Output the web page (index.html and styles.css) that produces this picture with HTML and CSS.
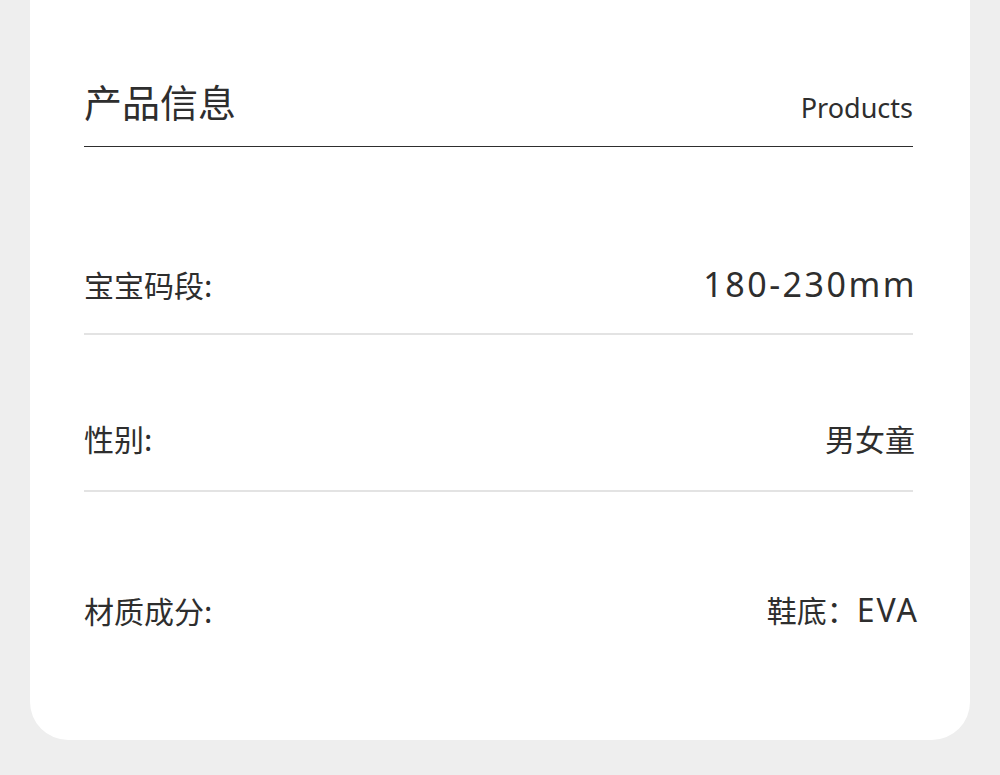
FILE: index.html
```html
<!DOCTYPE html>
<html lang="zh">
<head>
<meta charset="utf-8">
<link rel="stylesheet" href="styles.css">
</head>
<body>
<div class="card">
  <div class="header">
    <h1 class="title">产品信息</h1>
    <span class="subtitle">Products</span>
  </div>
  <div class="row row-1">
    <span class="label">宝宝码段:</span>
    <span class="value value-num">180-230mm</span>
  </div>
  <div class="row row-2">
    <span class="label">性别:</span>
    <span class="value">男女童</span>
  </div>
  <div class="row row-3">
    <span class="label">材质成分:</span>
    <span class="value">鞋底：<span class="latin">EVA</span></span>
  </div>
</div>
</body>
</html>
```
FILE: styles.css
```css
html, body {
  margin: 0;
  padding: 0;
  background: #eeeeee;
  height: 775px;
  overflow: hidden;
}
body {
  font-family: "Noto Sans CJK SC", "Noto Sans", sans-serif;
  color: #2e2e2e;
}
.card {
  margin: 0 30px;
  background: #ffffff;
  border-radius: 0 0 38px 38px;
  padding: 0 55px 0 54px;
  box-sizing: border-box;
  height: 740px;
}
.header {
  display: flex;
  justify-content: space-between;
  align-items: flex-end;
  padding-top: 76px;
  padding-bottom: 20px;
  border-bottom: 1px solid #2e2e2e;
  margin-right: 2px;
}
.title {
  margin: 0;
  font-size: 38px;
  font-weight: 400;
  line-height: 50px;
  letter-spacing: 0;
}
.subtitle {
  font-size: 27px;
  line-height: 36px;
  padding-bottom: 0;
  font-family: "Noto Sans", sans-serif;
}
.row {
  display: flex;
  justify-content: space-between;
  align-items: center;
  line-height: 40px;
}
.row-1 {
  padding-top: 117px;
  padding-bottom: 29px;
  border-bottom: 2px solid #e3e3e3;
  margin-right: 2px;
}
.row-2 {
  padding-top: 83px;
  padding-bottom: 32px;
  border-bottom: 2px solid #e3e3e3;
  margin-right: 2px;
}
.row-3 {
  padding-top: 97px;
}
.row-1 .value, .row-2 .value {
  margin-right: -2px;
}
.label {
  font-size: 30px;
}
.value {
  font-size: 30px;
}
.value-num {
  font-size: 34px;
  font-family: "Noto Sans", sans-serif;
  letter-spacing: 2.5px;
}
.row-1 .value-num {
  margin-right: -4px;
}
.latin {
  font-family: "Noto Sans", sans-serif;
  font-size: 32px;
  letter-spacing: 2px;
  padding-left: 0;
}
.row-3 .value {
  margin-right: -4px;
}
```
